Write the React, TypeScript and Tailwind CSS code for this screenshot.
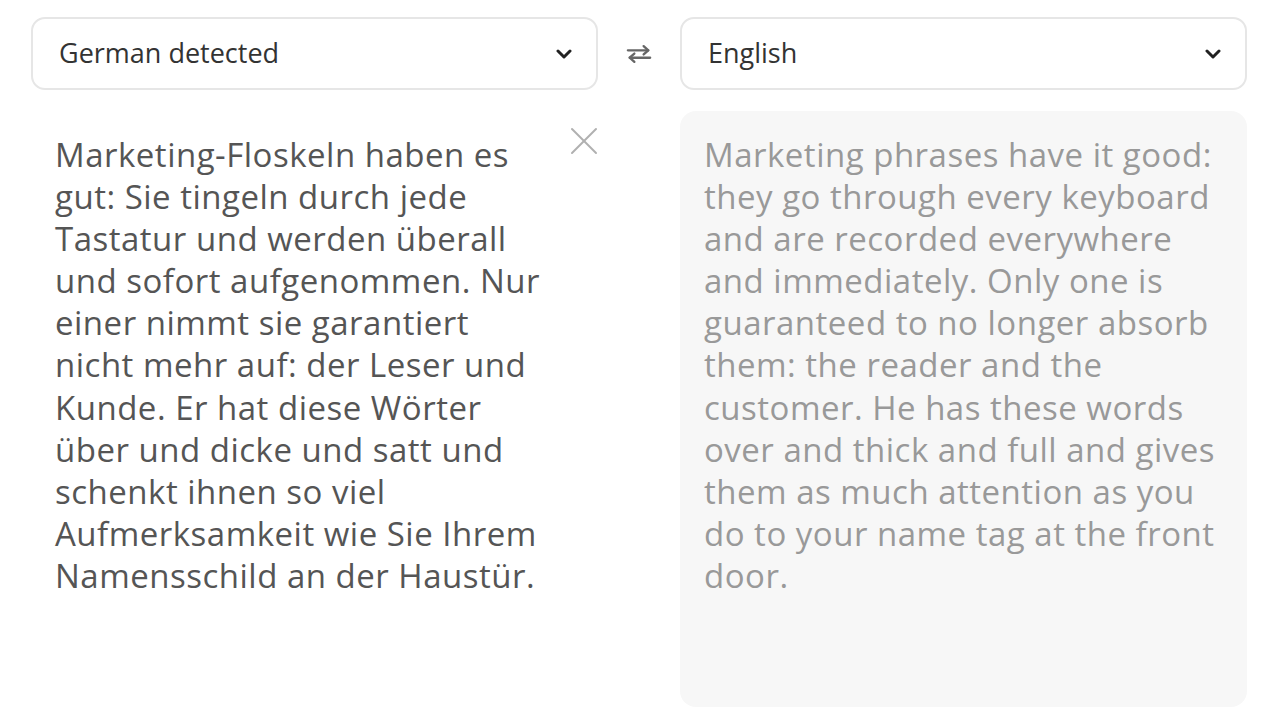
const sourceLines = [
  'Marketing-Floskeln haben es',
  'gut: Sie tingeln durch jede',
  'Tastatur und werden überall',
  'und sofort aufgenommen. Nur',
  'einer nimmt sie garantiert',
  'nicht mehr auf: der Leser und',
  'Kunde. Er hat diese Wörter',
  'über und dicke und satt und',
  'schenkt ihnen so viel',
  'Aufmerksamkeit wie Sie Ihrem',
  'Namensschild an der Haustür.',
];

const targetLines = [
  'Marketing phrases have it good:',
  'they go through every keyboard',
  'and are recorded everywhere',
  'and immediately. Only one is',
  'guaranteed to no longer absorb',
  'them: the reader and the',
  'customer. He has these words',
  'over and thick and full and gives',
  'them as much attention as you',
  'do to your name tag at the front',
  'door.',
];

function Chevron() {
  return (
    <svg width="16" height="10" viewBox="0 0 16 10" fill="none" stroke="#222" strokeWidth="3" strokeLinecap="round" strokeLinejoin="round">
      <path d="M2 2l6 6 6-6" />
    </svg>
  );
}

function LangSelect({ label }: { label: string }) {
  return (
    <button className="flex-1 h-[73px] flex items-center justify-between pl-[26px] pr-[24px] bg-white border-2 border-[#e6e6e6] rounded-[14px] text-[27px] text-[#333] text-left">
      <span>{label}</span>
      <Chevron />
    </button>
  );
}

function SwapIcon() {
  return (
    <svg width="28" height="22" viewBox="0 0 28 22" fill="none" stroke="#666" strokeWidth="2.5" strokeLinecap="round" strokeLinejoin="round">
      <path d="M2 7h22" />
      <path d="M19 2.5l5 4.5-5 4.5" />
      <path d="M26 15H4" />
      <path d="M9 10.5L4 15l5 4.5" />
    </svg>
  );
}

function CloseIcon() {
  return (
    <svg width="28" height="28" viewBox="0 0 28 28" fill="none" stroke="#b0b0b0" strokeWidth="2" strokeLinecap="round">
      <path d="M2 2l24 24" />
      <path d="M26 2L2 26" />
    </svg>
  );
}

export default function App() {
  return (
    <div className="w-[1280px] h-[720px] bg-white font-['Open_Sans',sans-serif] overflow-hidden [font-variant-ligatures:none]">
      <div className="flex items-center gap-[28px] pl-[31px] pr-[33px] pt-[17px]">
        <LangSelect label="German detected" />
        <div className="w-[26px] flex items-center justify-center">
          <SwapIcon />
        </div>
        <LangSelect label="English" />
      </div>

      <div className="flex gap-[82px] pl-[31px] pr-[33px] mt-[21px]">
        <div className="relative flex-1 h-[596px] pl-6 pt-[23px]">
          <div className="text-[33px] leading-[42.1px] tracking-[0.5px] text-[#555] whitespace-nowrap">
            {sourceLines.map((l) => (
              <div key={l}>{l}</div>
            ))}
          </div>
          <button className="absolute right-0 top-[16px]">
            <CloseIcon />
          </button>
        </div>
        <div className="flex-1 h-[596px] bg-[#f7f7f7] rounded-[16px] pl-6 pt-[23px]">
          <div className="text-[33px] leading-[42.1px] tracking-[0.5px] text-[#999] whitespace-nowrap">
            {targetLines.map((l) => (
              <div key={l}>{l}</div>
            ))}
          </div>
        </div>
      </div>
    </div>
  );
}
